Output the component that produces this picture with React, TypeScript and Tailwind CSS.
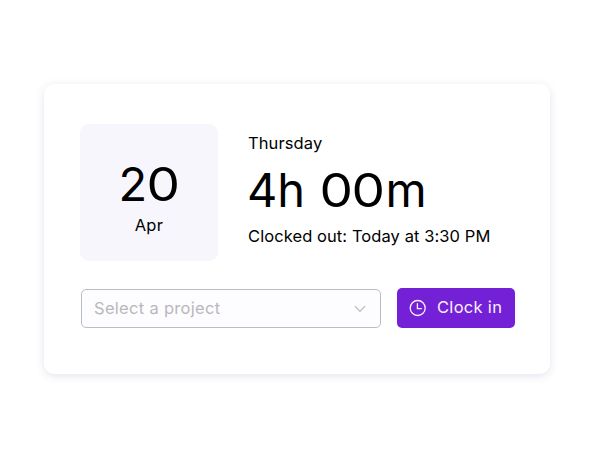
import React from 'react';

const ENTRY = {
  day: '20',
  month: 'Apr',
  weekday: 'Thursday',
  hours: '4h',
  minutes: '00',
  status: 'Clocked out: Today at 3:30 PM',
};

const ClockIcon: React.FC = () => (
  <svg width="18" height="18" viewBox="0 0 18 18" fill="none" stroke="currentColor" strokeWidth="1.3">
    <circle cx="8.7" cy="9" r="7.5" />
    <path d="M8.4 4.2V9.6H12.8" />
  </svg>
);

const ChevronIcon: React.FC = () => (
  <svg width="12" height="8" viewBox="0 0 12 8" fill="none" stroke="currentColor" strokeWidth="1.2">
    <path d="M1 1.2L6 6.3L11 1.2" />
  </svg>
);

// Zeros are widened to get a rounder numeral
const Digits: React.FC<{ value: string }> = ({ value }) => (
  <>
    {value.split('').map((digit, idx) => (
      <span key={idx} className={digit === '0' ? 'inline-block w-[32.5px] scale-x-[1.13] text-center' : 'inline-block'}>
        {digit}
      </span>
    ))}
  </>
);

export default function App() {
  return (
    <div className="h-[455px] w-[594px] overflow-hidden bg-white pl-11 pt-[84px] font-['Inter',sans-serif] text-black">
      <div className="h-[290px] w-[506px] rounded-[10px] bg-white pl-9 pt-10 shadow-[0_2px_10px_rgba(60,30,100,0.13)]">
        {/* Date and worked time */}
        <div className="flex h-[137px] gap-[30px]">
          <div className="flex w-[138px] flex-col items-center rounded-[9px] bg-[#f7f6fc] pt-[35px]">
            <p className="whitespace-nowrap text-[47px] leading-[50px]">
              <Digits value={ENTRY.day} />
            </p>
            <p className="mt-[5px] text-[16.5px] leading-[22px] tracking-[0.3px]">{ENTRY.month}</p>
          </div>

          <div className="whitespace-nowrap">
            <p className="mt-[8px] text-[16.5px] leading-[22px] tracking-[0.1px]">{ENTRY.weekday}</p>
            <div className="mt-[11px] flex text-[47px] leading-[50px]">
              <span className="-ml-px w-[72.5px]">{ENTRY.hours}</span>
              <span><Digits value={ENTRY.minutes} /></span>
              <span className="ml-px">m</span>
            </div>
            <p className="mt-[10px] text-[16.5px] leading-[22px] tracking-[0.08px]">{ENTRY.status}</p>
          </div>
        </div>

        {/* Project picker */}
        <div className="mt-[27px] flex gap-4">
          <button className="ml-px mt-px flex h-[39px] w-[300px] items-center justify-between rounded-[5px] border border-[#bdbcc0] bg-[#fdfcfe] pl-3 pr-3.5 text-[#b9b8bc]">
            <span className="text-[16.5px] tracking-[0.3px]">Select a project</span>
            <ChevronIcon />
          </button>
          <button className="flex h-10 w-[118px] items-center gap-[10px] rounded-[5px] bg-[#7420d6] pl-3 text-[#fbf0ff]">
            <ClockIcon />
            <span className="whitespace-nowrap pb-px text-[16.5px] tracking-[0.3px]">Clock in</span>
          </button>
        </div>
      </div>
    </div>
  );
}
